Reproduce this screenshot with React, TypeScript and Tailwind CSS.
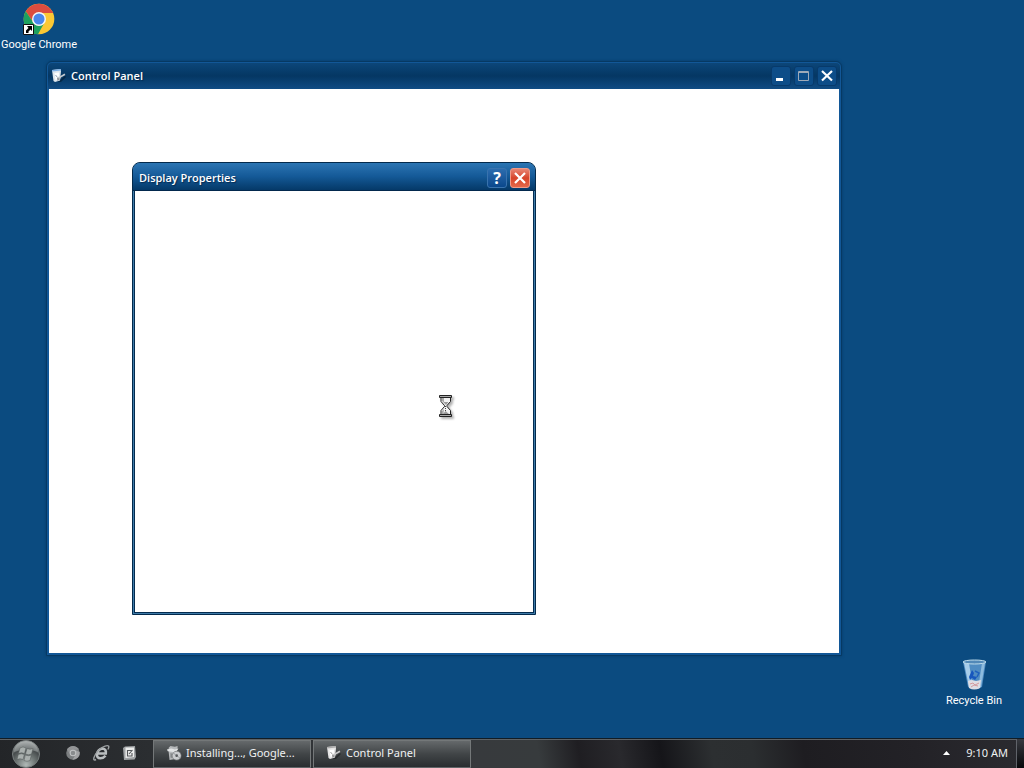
import React from 'react';

const ChromeIcon = ({ className = '' }: { className?: string }) => (
    <svg viewBox="0 0 48 48" className={className} aria-hidden="true">
        <circle cx="24" cy="24" r="23" fill="#fbc834" />
        <path d="M4.1 12.5A23 23 0 0 1 43.9 12.5L45.5 15H24A10 10 0 0 0 15 28.5Z" fill="#db4c3f" />
        <path d="M4.1 12.5A23 23 0 0 0 22.5 47L32.5 29A10 10 0 0 1 15 28.5Z" fill="#1da15f" />
        <circle cx="24" cy="24" r="10.5" fill="#f3f6f8" />
        <circle cx="24" cy="24" r="8.3" fill="#4a87ec" />
    </svg>
);

const PanelIcon = ({ className = '' }: { className?: string }) => (
    <svg viewBox="0 0 16 16" className={className} aria-hidden="true">
        <path d="M7 14l7-6 1 1-5 5z" fill="#000" opacity="0.35" />
        <path d="M1 2l8.5-1 .5 2-1 9.5-5 1.5L2.5 13z" fill="#dfe7ee" />
        <path d="M1 2l8.5-1 .5 1.6-8.6 1z" fill="#7fb2e8" />
        <path d="M3.5 5l4.5-.5-.4 6.5-3.1 1z" fill="#fff" />
        <path d="M4.5 7l1.8 2.2" fill="none" stroke="#8fa3b8" />
        <path d="M6 9.5l2.5-1L13.5 5.5l.9 1.5-4.4 2.5-1.5 2.5z" fill="#c3c9ce" />
        <path d="M6 9.5L9 11l-2.5 2z" fill="#8d9297" />
    </svg>
);

const RecycleIcon = () => (
    <svg viewBox="0 0 32 36" className="h-9 w-8" aria-hidden="true">
        <path d="M5 5h23l-4 25q-7 4-14 0z" fill="#4f8cc2" />
        <path d="M6 6l5 24q2 2 4 2L11 6z" fill="#a7cdea" />
        <path d="M27 6l-4 24-3 2 4-26z" fill="#9cc7e5" opacity="0.8" />
        <path d="M10 24l4-1 4 1 5-1-1 8q-6 3-11 0z" fill="#dedde4" />
        <path d="M12 27l3-1 2 2 4-2M13 30l3-2 4 1" fill="none" stroke="#d39a9e" />
        <path d="M11 20l3-7 2 3-1 3 4 1-2 3-3-2-2 2z" fill="#1757bd" />
        <path d="M17 14l4 2-2 4" fill="none" stroke="#1f61bd" strokeWidth="1.5" />
        <ellipse cx="16.5" cy="5" rx="11.5" ry="2" fill="#5289b8" stroke="#bfddec" />
    </svg>
);

const StartOrb = () => (
    <svg viewBox="0 0 30 30" className="h-[30px] w-[30px]" aria-hidden="true">
        <defs>
            <radialGradient id="orb" cx="50%" cy="90%" r="85%">
                <stop offset="0" stopColor="#b1b9b7" />
                <stop offset="0.45" stopColor="#6a7170" />
                <stop offset="0.7" stopColor="#474c4d" />
                <stop offset="1" stopColor="#999d9d" />
            </radialGradient>
        </defs>
        <circle cx="15" cy="15" r="13.5" fill="url(#orb)" stroke="#777d7d" />
        <path d="M3 13a12 11 0 0 1 24 0q-12-5-24 0z" fill="#c8cece" opacity="0.35" />
        <g fill="#a9afad" stroke="#555b5b" strokeWidth="0.5">
            <path d="M9 9q3-2 6 0l-1.5 5.5q-3-1.5-6 0z" />
            <path d="M16 9.5q3 1.5 6 0L20.5 15q-3 1.5-6 0z" />
            <path d="M7.3 15.5q3-1.5 6 0L12 20.5q-3-1.5-6 0z" />
            <path d="M14.3 16q3 1.5 6 0L19 21.5q-3 1.5-6 0z" />
        </g>
    </svg>
);

const GrayChromeIcon = () => (
    <svg viewBox="0 0 16 16" className="h-4 w-4" aria-hidden="true">
        <circle cx="8" cy="8" r="6.8" fill="#7b7e80" />
        <path d="M2 4.6A6.8 6.8 0 0 1 14 4.6L8 5Q5 5 5 9z" fill="#929496" />
        <path d="M14.7 7A6.8 6.8 0 0 1 7.5 14.7L10.7 9.4Q11.5 7 10 5z" fill="#a2a3a5" />
        <circle cx="8" cy="8" r="3.3" fill="#c2c4c5" />
        <circle cx="8" cy="8" r="2.3" fill="#898c8e" />
    </svg>
);

const ExplorerIcon = () => (
    <svg viewBox="0 0 18 18" className="h-[18px] w-[18px]" aria-hidden="true">
        <path d="M5.5 9.5h8.3Q14.5 5 10.5 4.5 6 5 5 10q-.5 4 3.5 4.2 3 0 5-2.5" fill="none" stroke="#b9bdbf" strokeWidth="2.6" />
        <path d="M4 15.5Q1 17 2 13.5 4.5 7 10 3.5 15 .8 16.5 2q.8 1-.6 3.5" fill="none" stroke="#9da1a3" strokeWidth="1.4" />
    </svg>
);

const DesktopIcon = () => (
    <svg viewBox="0 0 16 16" className="h-4 w-4" aria-hidden="true">
        <path d="M2 3l2-1.5L14 1l1 11-1.5 2.5-10.5.5z" fill="#a0a3a5" />
        <path d="M4.5 2.5H13V12l-8.5 1z" fill="#eceded" />
        <path d="M10.5 5.5H6.5v5.5h4.5V8M8 9l3.5-4" fill="none" stroke="#54575a" strokeWidth="1.1" />
    </svg>
);

const InstallerIcon = () => (
    <svg viewBox="0 0 18 18" className="h-4 w-4" aria-hidden="true">
        <path d="M3 3l2-2 5 1 3-1v4L10 7l-1 9-5 1-1-9z" fill="#b5b8ba" />
        <path d="M1 5l5-1 4 1 4-1-2 3-4 1-6-1z" fill="#e2e4e5" />
        <path d="M5 9l3 1-.5 5L5 14z" fill="#85888a" />
        <circle cx="12" cy="12" r="5" fill="#cbcdcf" stroke="#777b7d" strokeWidth="0.7" />
        <circle cx="12" cy="12" r="1.5" fill="#55595c" />
        <path d="M8 9l3 2M13.5 13l2.5 2" stroke="#929698" />
    </svg>
);

const Hourglass = () => (
    <svg viewBox="0 0 18 24" className="absolute left-[438px] top-[394px] h-6 w-[18px] drop-shadow-[2px_2px_1px_rgba(0,0,0,0.3)]" aria-hidden="true">
        <path d="M3 3.5h9.5v4l-3.5 4v1l3.5 4v4H3v-4l3.5-4v-1L3 7.5z" fill="#f3f3f3" stroke="#222" />
        <path d="M4 4h2v3.5l2 3L4 7zM4 20v-3l2-2-.5 5z" fill="#aaa" />
        <path d="M5.5 8h5L8 11zM5 20l2.5-3L11 20z" fill="#9b9b9b" />
        <path d="M7.5 12v5" stroke="#444" strokeDasharray="1 1" />
        <path d="M1.5 1.5h12v2h-12zM1.5 20.5h12v2h-12z" fill="#aaa" stroke="#222" />
    </svg>
);

const captionButton = 'flex h-5 w-5 items-center justify-center rounded-[3px] border';
const taskButton = 'flex h-7 w-[158px] items-center gap-1 border border-[#747879] border-b-[#606568] bg-linear-to-b from-[#65696b] via-[#414547] to-[#292d30] pb-0.5 pl-3 text-left';

const TitleBar = ({ title, children, className }: { title: React.ReactNode; children: React.ReactNode; className: string }) => (
    <header className={`flex shrink-0 items-center justify-between ${className}`}>
        <h2 className="flex items-center gap-1 font-['Open_Sans',sans-serif] text-[11px] font-semibold text-white [text-shadow:1px_1px_1px_#062b51]">{title}</h2>
        <div className="flex gap-[3px]">{children}</div>
    </header>
);

const ControlPanel = () => (
    <section className="absolute left-[46px] top-[61px] flex h-[595px] w-[796px] flex-col rounded-t-md border border-[#063963] bg-[#125797] p-px shadow-[0_0_3px_#073b68]">
        <TitleBar
            className="h-[26px] rounded-t bg-linear-to-b from-[#0c4679] via-[#053763] to-[#104c84] pl-[3px] pr-[3px]"
            title={<><PanelIcon className="h-4 w-4" />Control Panel</>}
        >
            <button aria-label="Minimize" className={`${captionButton} border-[#073a6b] bg-[#0d4d88]`}>
                <svg viewBox="0 0 18 18" className="h-[18px] w-[18px]"><path d="M4 11h7v3H4z" fill="#fff" /></svg>
            </button>
            <button aria-label="Maximize" className={`${captionButton} border-[#073a6b] bg-[#0d4d88]`}>
                <svg viewBox="0 0 18 18" className="h-[18px] w-[18px]"><path d="M3.5 4.5h10v9h-10zM4 5.5h9" fill="none" stroke="#9faab8" /></svg>
            </button>
            <button aria-label="Close" className={`${captionButton} border-[#073a6b] bg-[#0d4d88]`}>
                <svg viewBox="0 0 18 18" className="h-[18px] w-[18px]"><path d="M4 4l10 9.5M14 4L4 13.5" stroke="#fff" strokeWidth="2.2" /></svg>
            </button>
        </TitleBar>
        <div className="mx-px mb-px flex-1 bg-white" />
    </section>
);

const DisplayProperties = () => (
    <section className="absolute left-[132px] top-[162px] flex h-[453px] w-[404px] flex-col overflow-hidden rounded-t-lg border border-[#032a4c] bg-[#3e7ba8] px-px pb-px">
        <TitleBar
            className="-mx-px h-7 border-b border-[#02284d] bg-linear-to-b from-[#2b75b3] via-[#145997] to-[#053968] pl-1.5 pr-[5px] pt-0.5"
            title={<span className="pt-0.5">Display Properties</span>}
        >
            <button aria-label="Help" className={`${captionButton} border-[#3973ae] bg-linear-to-b from-[#2b6cae] to-[#0a488c] font-['Open_Sans',sans-serif] text-base font-bold leading-4 text-white`}>?</button>
            <button aria-label="Close" className={`${captionButton} border-[#ef9a87] bg-linear-to-b from-[#e78473] via-[#d74329] to-[#e26749]`}>
                <svg viewBox="0 0 18 18" className="h-[18px] w-[18px]"><path d="M4 4l10 10M14 4L4 14" stroke="#fff" strokeWidth="2.2" /></svg>
            </button>
        </TitleBar>
        <div className="flex-1 border border-t-0 border-[#042c50] bg-white" />
    </section>
);

const Taskbar = () => (
    <footer className="flex h-[30px] shrink-0 items-center border-t border-[#111c24] bg-[#2a2c2f] font-['Noto_Sans',sans-serif] text-[11px] text-[#eff1f2]">
        <div className="flex h-full flex-1 items-center border-t border-[#5d6265] bg-[linear-gradient(80deg,#232528_0%,#2b2e31_15%,#373a3d_47%,#373b3d_53%,#1f1e22_57%,#29292d_61%,#151519_65%,#2c2f31_70%,#2b2e30_74%,#1e1d21_79%,#232227_90%,#2a2a2f_100%)]">
            <button aria-label="Start" className="ml-[11px] w-[30px]"><StartOrb /></button>
            <nav className="-mt-0.5 ml-6 flex w-[88px] items-center gap-[11px]">
                <button aria-label="Google Chrome"><GrayChromeIcon /></button>
                <button aria-label="Internet Explorer"><ExplorerIcon /></button>
                <button aria-label="Show desktop"><DesktopIcon /></button>
            </nav>
            <div className="flex gap-0.5">
                <button className={taskButton}><InstallerIcon />Installing..., Google...</button>
                <button className={taskButton}><PanelIcon className="h-4 w-4 grayscale" />Control Panel</button>
            </div>
            <div className="ml-auto flex items-center gap-4 pb-0.5 pr-2">
                <button aria-label="Show hidden icons">
                    <svg viewBox="0 0 7 4" className="h-1 w-[7px]"><path d="M0 4l3.5-4L7 4z" fill="#fff" /></svg>
                </button>
                <time>9:10 AM</time>
            </div>
        </div>
        <button aria-label="Desktop" className="h-full w-2 border-l border-[#60636a] bg-linear-to-b from-[#383a40] to-[#08090c]" />
    </footer>
);

export default function App() {
    return (
        <div className="flex h-screen flex-col overflow-hidden bg-[#0b4b80] font-['Roboto',sans-serif] text-[11px] text-white">
            <main className="relative flex flex-1 flex-col justify-between">
                <button className="flex w-[78px] flex-col items-center gap-0.5 pt-[3px] leading-4">
                    <span className="relative">
                        <ChromeIcon className="h-8 w-8" />
                        <svg viewBox="0 0 11 11" className="absolute bottom-0 left-0 h-[11px] w-[11px]">
                            <path d="M.5.5h10v10H.5z" fill="#fff" stroke="#111" />
                            <path d="M4 2h5v5L7.5 5.5 5.5 7.5V9H3V6.5L5.5 4z" fill="#000" />
                        </svg>
                    </span>
                    <span className="whitespace-nowrap">Google Chrome</span>
                </button>
                <button className="mr-3 flex w-[76px] flex-col items-center self-end pb-[29px] leading-4">
                    <RecycleIcon />
                    <span className="whitespace-nowrap">Recycle Bin</span>
                </button>
                <ControlPanel />
                <DisplayProperties />
                <Hourglass />
            </main>
            <Taskbar />
        </div>
    );
}
